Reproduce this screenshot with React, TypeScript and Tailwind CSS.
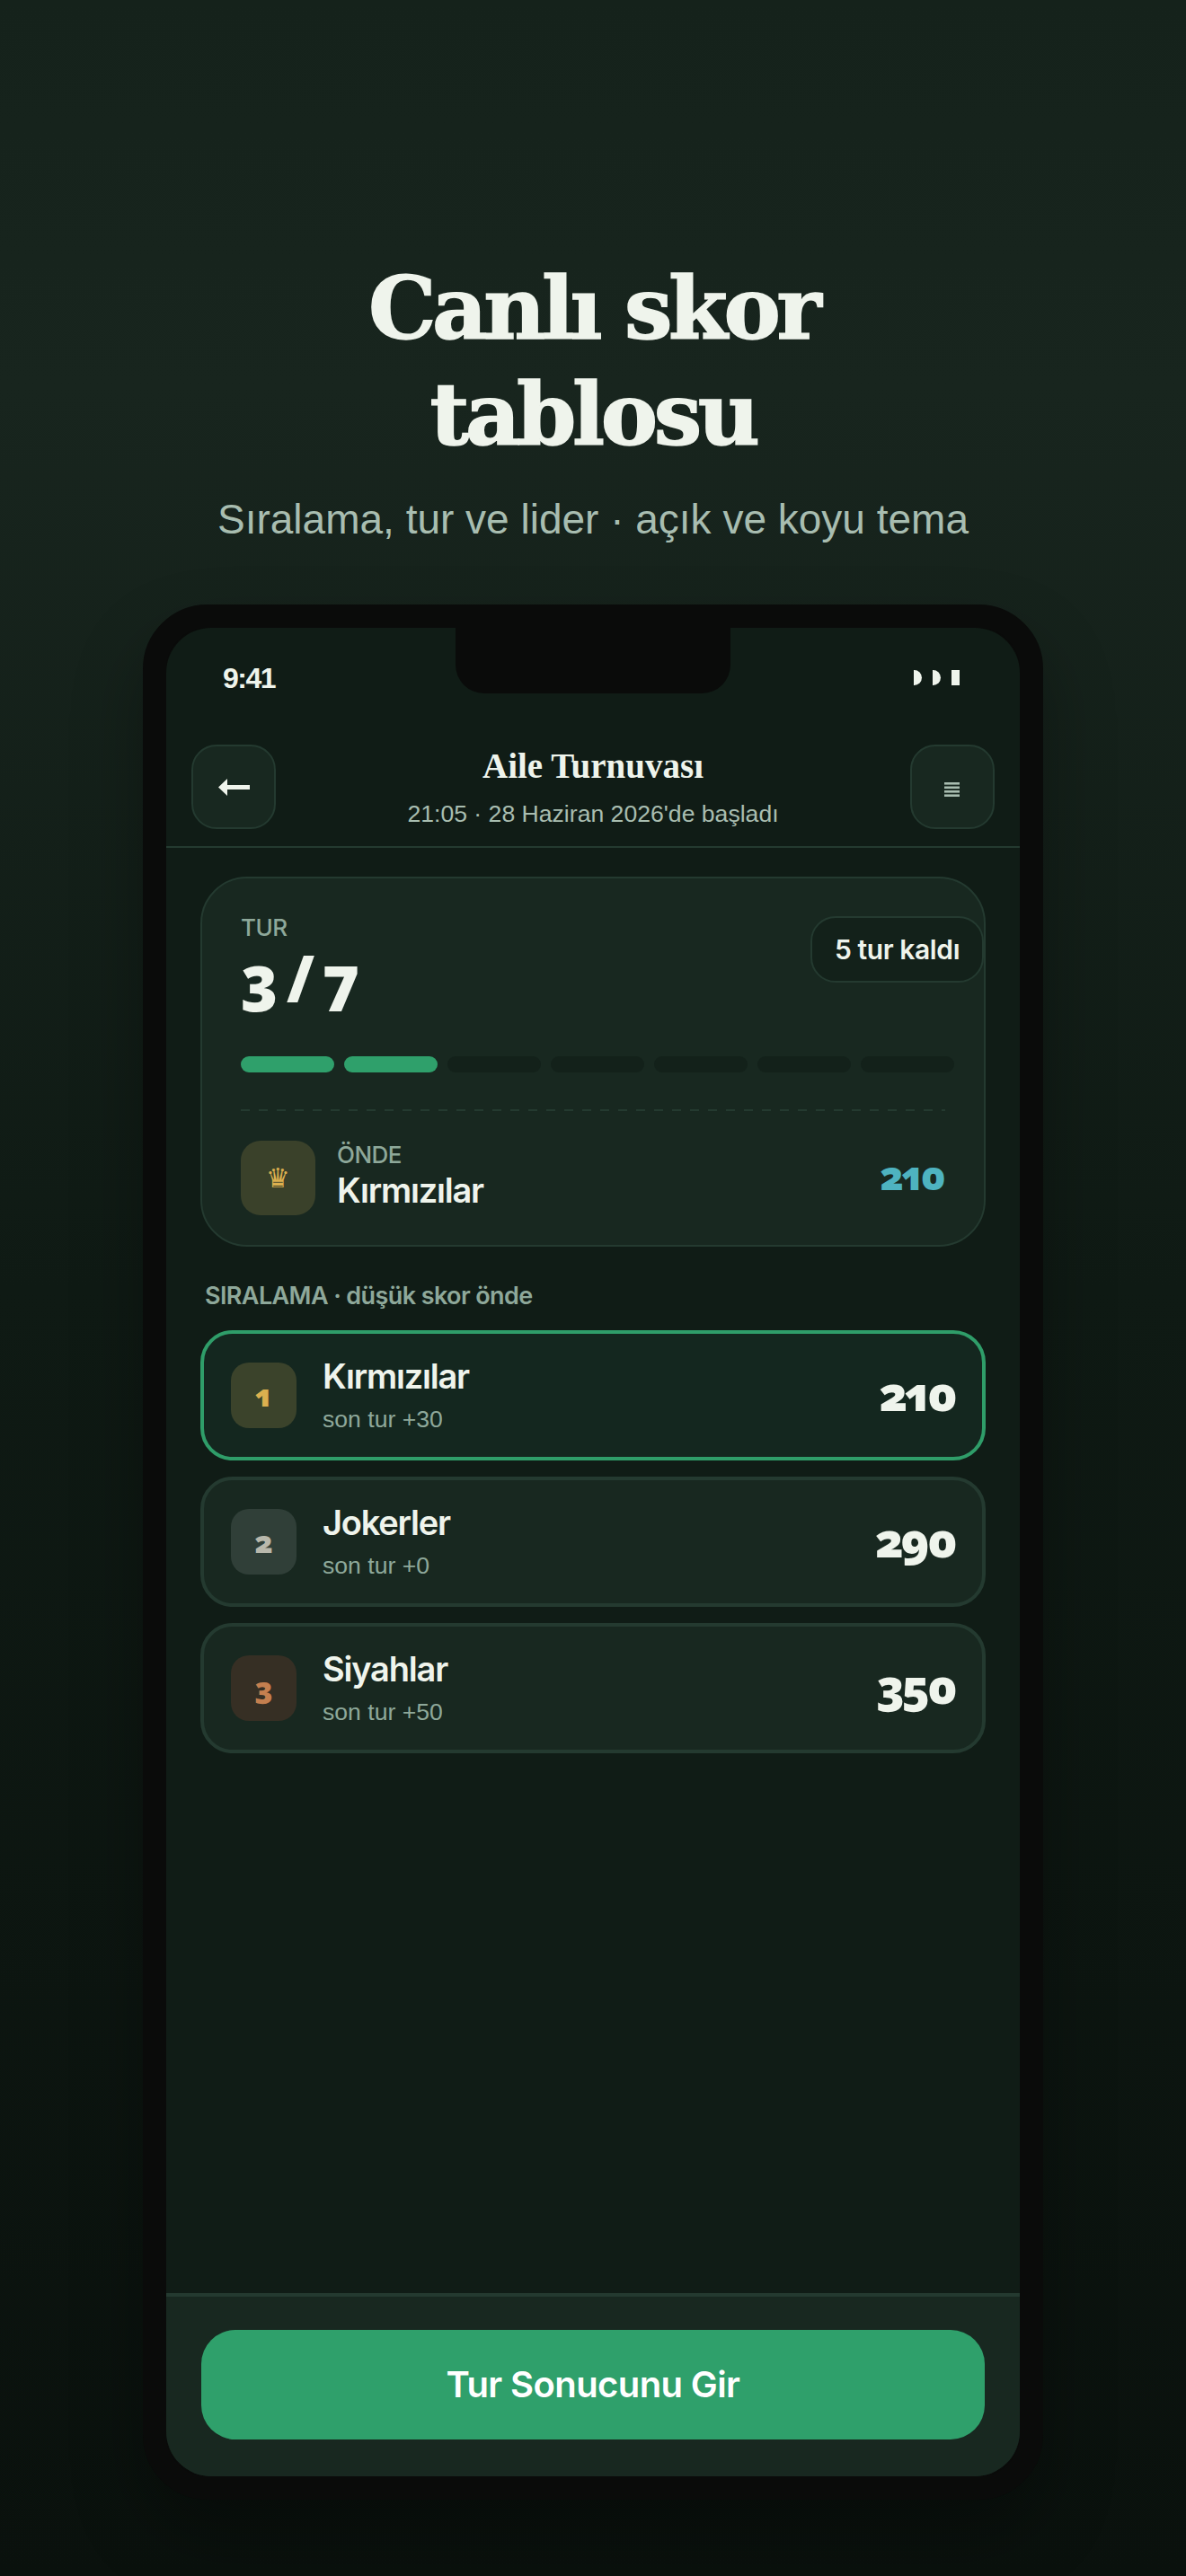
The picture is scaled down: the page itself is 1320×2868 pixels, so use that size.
import React from 'react';

const STANDINGS = [
  { rank: '1', name: 'Kırmızılar', last: 'son tur +30', score: '210', leader: true, badge: 'bg-[#3b432b] text-[#dcb04f]' },
  { rank: '2', name: 'Jokerler', last: 'son tur +0', score: '290', leader: false, badge: 'bg-[#303f38] text-[#b8b8ac]' },
  { rank: '3', name: 'Siyahlar', last: 'son tur +50', score: '350', leader: false, badge: 'bg-[#362f24] text-[#c47f4f]' },
];

const SEGMENTS = [true, true, false, false, false, false, false];

const App: React.FC = () => {
  return (
    <div className="h-[2868px] overflow-hidden flex flex-col items-center bg-[linear-gradient(180deg,#15221b_0%,#18251e_15%,#0f1a14_50%,#0a110d_100%)] font-['Inter',sans-serif]">
      {/* Heading */}
      <h1 className="mt-[285px] w-[700px] text-center font-['DejaVu_Serif',serif] font-bold text-[95px] leading-[118px] tracking-[-4.4px] [-webkit-text-stroke:1.5px_#eff4ec] text-[#eff4ec]">
        Canlı skor<br />tablosu
      </h1>
      <p className="mt-[29px] font-['Liberation_Sans',sans-serif] text-[46px] leading-[56px] text-[#a8bdb0]">
        Sıralama, tur ve lider · açık ve koyu tema
      </p>

      {/* Phone */}
      <div className="mt-[67px] w-[1002px] h-[2110px] shrink-0 rounded-[72px] border-[26px] border-[#0a0b0a] bg-[#0a0b0a] shadow-[0_40px_80px_rgba(0,0,0,0.3)]">
        <div className="relative h-full rounded-[50px] overflow-hidden bg-[#101c16] flex flex-col">
          <div className="absolute top-0 left-[322px] w-[306px] h-[73px] rounded-b-[32px] bg-[#0a0b0a]" />

          {/* Status bar */}
          <div className="h-[130px] shrink-0 px-[63px] pt-[38px] flex items-start justify-between">
            <span className="font-['Liberation_Sans',sans-serif] font-bold text-[32px] leading-[36px] tracking-[-1.5px] text-[#eff4ec]">9:41</span>
            <div className="mt-[9px] mr-[4px] flex items-center gap-[12px]">
              <span className="w-[9px] h-[17px] rounded-r-full bg-[#eff4ec]" />
              <span className="w-[9px] h-[17px] rounded-r-full bg-[#eff4ec]" />
              <span className="w-[9px] h-[17px] bg-[#eff4ec]" />
            </div>
          </div>

          {/* Header */}
          <div className="h-[115px] shrink-0 px-[28px] border-b-2 border-[#243a30] flex items-start justify-between">
            <button className="w-[94px] h-[94px] rounded-[28px] border-2 border-[#243a30] bg-[#182820] flex items-center justify-center">
              <svg width="35" height="19" viewBox="0 0 35 19" fill="#eff4ec"><path d="M0 9.5 10 0v7h25v5H10v7z" /></svg>
            </button>
            <div className="text-center">
              <div className="mt-[2px] font-['Liberation_Serif',serif] font-bold text-[39px] leading-[44px] text-[#eff4ec]">Aile Turnuvası</div>
              <div className="mt-[14px] font-['Liberation_Sans',sans-serif] text-[26.6px] leading-[34px] text-[#a8bdb0]">21:05 · 28 Haziran 2026'de başladı</div>
            </div>
            <button className="w-[94px] h-[94px] rounded-[28px] border-2 border-[#243a30] bg-[#182820] flex items-center justify-center">
              <svg className="mt-[5px]" width="17" height="16" viewBox="0 0 17 16" fill="#a8bdb0">
                <rect y="0" width="17" height="2.6" />
                <rect y="4.5" width="17" height="2.6" />
                <rect y="9" width="17" height="2.6" />
                <rect y="13.4" width="17" height="2.6" />
              </svg>
            </button>
          </div>

          {/* Content */}
          <div className="flex-1 px-[38px] pt-[32px]">
            <div className="h-[412px] rounded-[52px] border-2 border-[#243a30] bg-[#182820] pt-[37px] px-[43px]">
              <div className="flex items-start justify-between">
                <div>
                  <div className="text-[26px] leading-[36px] font-medium tracking-[-0.5px] text-[#8ea89a]">TUR</div>
                  <div className="flex items-baseline gap-[10px] font-['Open_Sans',sans-serif] font-extrabold oldstyle-nums proportional-nums text-[70px] leading-[75px] text-[#eff4ec]">
                    <span>3</span><span>/</span><span>7</span>
                  </div>
                </div>
                <div className="mt-[5px] -mr-[43px] w-[193px] h-[74px] rounded-[28px] border-2 border-[#243a30] bg-[#13211a] flex items-center justify-center text-[30px] font-semibold tracking-[-0.4px] text-[#eff4ec]">
                  5 tur kaldı
                </div>
              </div>

              <div className="mt-[50px] flex gap-[11px]">
                {SEGMENTS.map((done, i) => (
                  <span key={i} className={done ? 'w-[104px] h-[18px] shrink-0 rounded-full bg-[#2fa06b]' : 'w-[104px] h-[18px] shrink-0 rounded-full bg-[#13211a]'} />
                ))}
              </div>

              <div className="mt-[41px] w-[784px] h-[2px] bg-[repeating-linear-gradient(90deg,#243a30_0,#243a30_10px,transparent_10px,transparent_20px)]" />

              <div className="mt-[33px] flex items-center">
                <div className="w-[83px] h-[83px] rounded-[22px] bg-[#3a412a] flex items-center justify-center font-['DejaVu_Sans',sans-serif] text-[30px] leading-none text-[#dcb04f]">♛</div>
                <div className="ml-[24px] -mt-[6px]">
                  <div className="text-[26px] leading-[32px] font-medium tracking-[-0.5px] text-[#8ea89a]">ÖNDE</div>
                  <div className="text-[38px] leading-[46px] font-semibold tracking-[-1.2px] text-[#eff4ec]">Kırmızılar</div>
                </div>
                <div className="ml-auto mr-[1px] -mt-[8px] font-['Open_Sans',sans-serif] font-extrabold oldstyle-nums proportional-nums text-[44px] tracking-[-2px] leading-none text-[#4eb3c0]">210</div>
              </div>
            </div>

            <div className="mt-[37px] mb-[20px] pl-[5px] text-[27px] leading-[36px] font-semibold tracking-[-0.6px] text-[#8ea89a]">
              SIRALAMA · düşük skor önde
            </div>

            <div className="flex flex-col gap-[18px]">
              {STANDINGS.map((row) => (
                <div
                  key={row.rank}
                  className={row.leader
                    ? 'h-[145px] rounded-[36px] border-4 border-[#2f9d69] bg-[#14271f] px-[30px] flex items-center'
                    : 'h-[145px] rounded-[36px] border-4 border-[#243a30] bg-[#182820] px-[30px] flex items-center'}
                >
                  <div className={`w-[73px] h-[73px] rounded-[20px] flex items-center justify-center font-['Open_Sans',sans-serif] font-extrabold oldstyle-nums text-[34px] ${row.badge}`}>
                    {row.rank}
                  </div>
                  <div className="ml-[29px] -mt-[3px]">
                    <div className="text-[38px] leading-[46px] font-semibold tracking-[-1.2px] text-[#eff4ec]">{row.name}</div>
                    <div className="mt-[9px] font-['Liberation_Sans',sans-serif] text-[26.6px] leading-[32px] text-[#8ea89a]">{row.last}</div>
                  </div>
                  <div className="ml-auto -mt-[6px] font-['Open_Sans',sans-serif] font-extrabold oldstyle-nums proportional-nums text-[53px] tracking-[-3px] leading-none text-[#eff4ec]">{row.score}</div>
                </div>
              ))}
            </div>
          </div>

          {/* Footer */}
          <div className="h-[204px] shrink-0 border-t-4 border-[#243a30] bg-[#182820] px-[39px] pt-[37px]">
            <button className="w-full h-[122px] rounded-[38px] bg-[#2fa06b] text-[40px] font-semibold tracking-[-0.6px] text-white">
              Tur Sonucunu Gir
            </button>
          </div>
        </div>
      </div>
    </div>
  );
};

export default App;
